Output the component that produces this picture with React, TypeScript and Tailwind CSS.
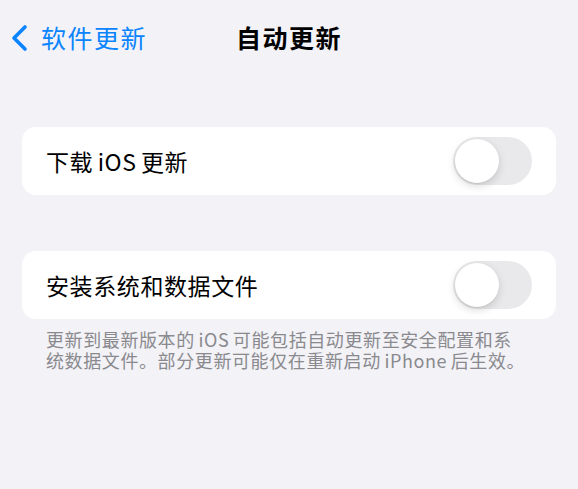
const FONT = '"Noto Sans CJK SC", "Noto Sans", sans-serif';

function Toggle() {
  return (
    <div className="w-[79px] h-[48px] rounded-full bg-[#e9e9eb] p-[2px] flex items-center">
      <div className="w-[44px] h-[44px] rounded-full bg-white shadow-[0_3px_8px_rgba(0,0,0,0.15),0_1px_1px_rgba(0,0,0,0.06)]" />
    </div>
  );
}

function Row({ label }: { label: string }) {
  return (
    <div className="mx-[22px] h-[68px] rounded-[14px] bg-white flex items-center justify-between pl-[24px] pr-[24px]">
      <span className="text-[23px] tracking-[0.6px] text-black">{label}</span>
      <Toggle />
    </div>
  );
}

export default function App() {
  return (
    <div className="w-[578px] h-[489px] bg-[#f2f2f7] overflow-hidden" style={{ fontFamily: FONT }}>
      <div className="relative h-[76px] flex items-center">
        <div className="flex items-center pl-[10px] text-[#0a84ff]">
          <svg width="20" height="28" viewBox="0 0 20 28" fill="none">
            <path d="M15 3 L4 14 L15 25" stroke="currentColor" strokeWidth="3.6" strokeLinecap="round" strokeLinejoin="round" />
          </svg>
          <span className="ml-[11px] text-[25px] tracking-[1.5px]">软件更新</span>
        </div>
        <div className="absolute left-0 right-0 text-center pointer-events-none">
          <span className="text-[25px] tracking-[1.5px] font-bold text-black">自动更新</span>
        </div>
      </div>
      <div className="h-[51px]" />
      <Row label={"下载\u2006iOS\u2006更新"} />
      <div className="h-[56px]" />
      <Row label="安装系统和数据文件" />
      <p className="ml-[46px] w-[482px] mt-[10px] text-[18px] tracking-[0.6px] leading-[21px] text-[#8a8a8e]">
        {"更新到最新版本的\u2006iOS\u2006可能包括自动更新至安全配置和系统数据文件。部分更新可能仅在重新启动\u2006iPhone\u2006后生效。"}
      </p>
    </div>
  );
}
